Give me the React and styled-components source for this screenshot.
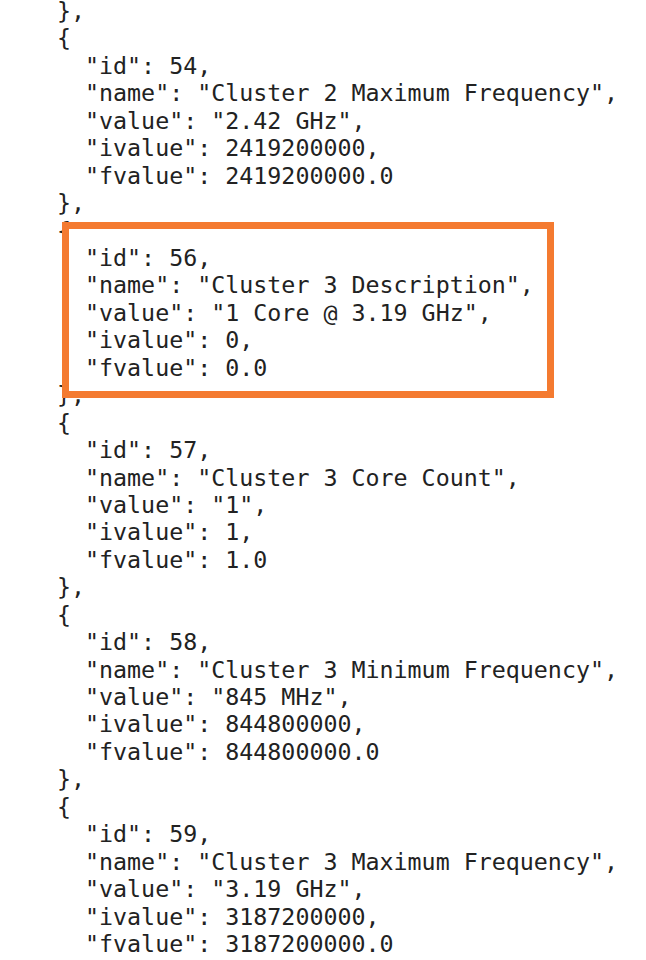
import React from 'react'
import styled, { createGlobalStyle } from 'styled-components'

const GlobalStyle = createGlobalStyle`
  html, body {
    margin: 0;
    padding: 0;
    background: #ffffff;
  }
`

const Page = styled.div`
  width: 646px;
  height: 960px;
  overflow: hidden;
  background: #ffffff;
  box-sizing: border-box;
`

const Code = styled.div`
  display: flex;
  flex-direction: column;
  margin-top: -3px;
  padding-left: 57px;
  font-family: "DejaVu Sans Mono", "Liberation Mono", monospace;
  font-size: 23.3px;
  line-height: 27.44px;
  color: #222222;
`

const Line = styled.div`
  white-space: pre;
  padding-left: ${p => p.$indent * 28}px;
  height: 27.44px;
`

// the orange callout is pasted over the listing, hiding the braces around it
const Callout = styled.div`
  position: relative;
  z-index: 1;
  width: 492px;
  margin: -21.5px 0 -17.2px 5px;
  padding: 14.5px 0 10.3px 16px;
  border: 7px solid #f47a30;
  background: #ffffff;
  box-sizing: border-box;
  display: flex;
  flex-direction: column;
`

const entries = [
  { id: 54, name: 'Cluster 2 Maximum Frequency', value: '2.42 GHz', ivalue: '2419200000', fvalue: '2419200000.0' },
  { id: 56, name: 'Cluster 3 Description', value: '1 Core @ 3.19 GHz', ivalue: '0', fvalue: '0.0', marked: true },
  { id: 57, name: 'Cluster 3 Core Count', value: '1', ivalue: '1', fvalue: '1.0' },
  { id: 58, name: 'Cluster 3 Minimum Frequency', value: '845 MHz', ivalue: '844800000', fvalue: '844800000.0' },
  { id: 59, name: 'Cluster 3 Maximum Frequency', value: '3.19 GHz', ivalue: '3187200000', fvalue: '3187200000.0' },
]

const fieldLines = e => [
  `"id": ${e.id},`,
  `"name": "${e.name}",`,
  `"value": "${e.value}",`,
  `"ivalue": ${e.ivalue},`,
  `"fvalue": ${e.fvalue}`,
]

export default function App() {
  return (
    <Page>
      <GlobalStyle />
      <Code>
        <Line $indent={0}>{'},'}</Line>
        {entries.map((e, i) => (
          <React.Fragment key={e.id}>
            <Line $indent={0}>{'{'}</Line>
            {e.marked ? (
              <Callout>
                {fieldLines(e).map(t => (
                  <Line key={t} $indent={0}>{t}</Line>
                ))}
              </Callout>
            ) : (
              fieldLines(e).map(t => (
                <Line key={t} $indent={1}>{t}</Line>
              ))
            )}
            {i < entries.length - 1 && <Line $indent={0}>{'},'}</Line>}
          </React.Fragment>
        ))}
      </Code>
    </Page>
  )
}
